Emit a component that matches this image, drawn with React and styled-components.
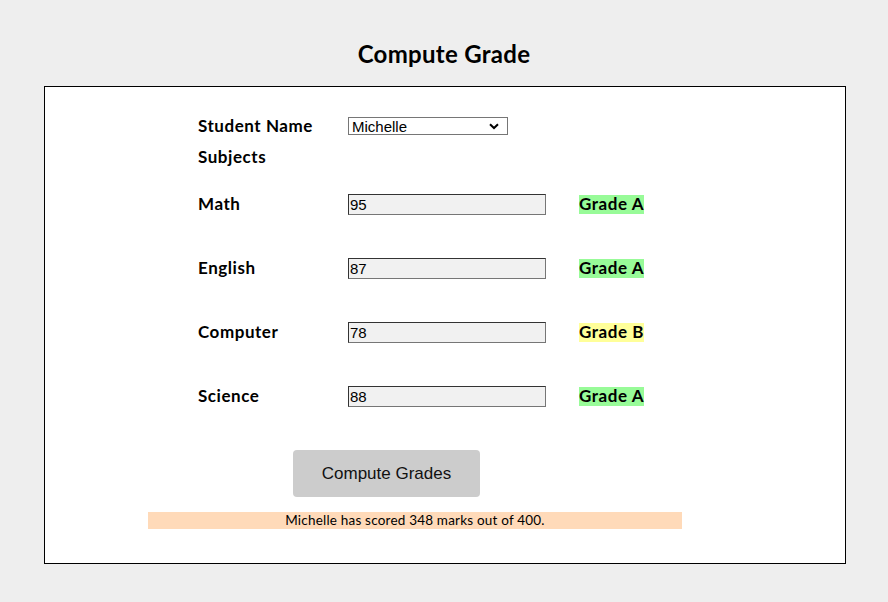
import React from "react";
import styled, { createGlobalStyle } from "styled-components";

const Global = createGlobalStyle`
  html, body { margin: 0; padding: 0; background: #eeeeee; }
  body { font-family: "Lato", "Open Sans", sans-serif; color: #000; }
`;

const Page = styled.div`
  width: 888px;
  height: 602px;
  padding-top: 40px;
  box-sizing: border-box;
`;

const Title = styled.h1`
  margin: 0 0 18px;
  height: 28px;
  line-height: 28px;
  text-align: center;
  font-size: 24px;
  letter-spacing: 0.3px;
  font-weight: 700;
`;

const Card = styled.div`
  margin-left: 44px;
  width: 802px;
  height: 478px;
  box-sizing: border-box;
  border: 1px solid #000;
  background: #fff;
  padding-top: 24px;
`;

const Form = styled.div`
  display: grid;
  grid-template-columns: 150px 231px auto;
  grid-template-rows: 30px 31px 64px 64px 64px 64px;
  margin-left: 153px;
  align-items: center;
`;

const Label = styled.div`
  font-size: 17px;
  letter-spacing: 0.55px;
  font-weight: 700;
  line-height: 20px;
`;

const SelectBox = styled.div`
  width: 160px;
  height: 18px;
  box-sizing: border-box;
  border: 1px solid #767676;
  display: flex;
  align-items: center;
  justify-content: space-between;
  padding: 0 8px 0 3px;
  font-family: "Liberation Sans", Arial, sans-serif;
  font-size: 15px;
  color: #000;
`;

const Field = styled.input`
  width: 198px;
  height: 21px;
  box-sizing: border-box;
  border: 1px solid #767676;
  border-top-color: #333;
  border-left-color: #333;
  background: #f1f1f1;
  padding: 0 1px;
  margin: 0;
  font-family: "Liberation Sans", Arial, sans-serif;
  font-size: 15px;
  color: #000;
  outline: none;
`;

const Grade = styled.span`
  justify-self: start;
  display: inline-block;
  padding: 0;
  height: 19px;
  line-height: 18px;
  font-size: 17px;
  letter-spacing: 0.55px;
  font-weight: 700;
  background: ${(p) => (p.$grade === "B" ? "#ffff99" : "#98fb98")};
`;

const Button = styled.button`
  display: block;
  margin: 22px 0 0 248px;
  width: 187px;
  height: 47px;
  border: none;
  border-radius: 4px;
  background: #cccccc;
  font-family: "Liberation Sans", Arial, sans-serif;
  font-size: 17px;
  color: #111;
  cursor: pointer;
`;

const Result = styled.div`
  margin: 15px 0 0 103px;
  width: 534px;
  height: 17px;
  line-height: 17px;
  background: #ffdab9;
  text-align: center;
  font-size: 13.5px;
  letter-spacing: 0.2px;
`;

const Chevron = () => (
  <svg width="10" height="7" viewBox="0 0 10 7">
    <path d="M1 1.2 L5 5 L9 1.2" fill="none" stroke="#000" strokeWidth="2" />
  </svg>
);

const subjects = [
  { name: "Math", score: 95, grade: "A" },
  { name: "English", score: 87, grade: "A" },
  { name: "Computer", score: 78, grade: "B" },
  { name: "Science", score: 88, grade: "A" },
];

export default function App() {
  const total = subjects.reduce((s, x) => s + x.score, 0);
  return (
    <Page>
      <Global />
      <Title>Compute Grade</Title>
      <Card>
        <Form>
          <Label>Student Name</Label>
          <SelectBox>
            <span>Michelle</span>
            <Chevron />
          </SelectBox>
          <span />
          <Label>Subjects</Label>
          <span />
          <span />
          {subjects.map((s) => (
            <React.Fragment key={s.name}>
              <Label>{s.name}</Label>
              <Field readOnly value={s.score} />
              <Grade $grade={s.grade}>Grade {s.grade}</Grade>
            </React.Fragment>
          ))}
        </Form>
        <Button>Compute Grades</Button>
        <Result>Michelle has scored {total} marks out of 400.</Result>
      </Card>
    </Page>
  );
}
